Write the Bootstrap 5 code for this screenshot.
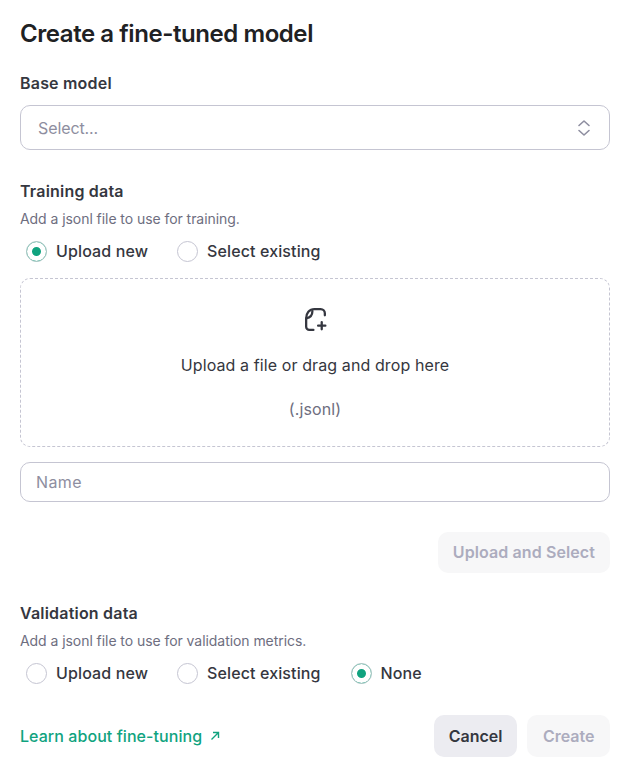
<!DOCTYPE html>
<html lang="en">
<head>
<meta charset="utf-8">
<title>Create a fine-tuned model</title>
<link href="https://cdn.jsdelivr.net/npm/bootstrap@5.3.0/dist/css/bootstrap.min.css" rel="stylesheet">
<style>
html,body{height:100%}
body{font-family:Inter,"Liberation Sans",sans-serif;color:#202123;background:#fff;font-size:16px;letter-spacing:-.2px;overflow:hidden}
.sheet{padding:18px 21px 0 20px;width:631px}
.ttl{font-size:24px;line-height:31px;font-weight:600;margin:0 0 22px;color:#202123;letter-spacing:-.43px}
.lbl{font-size:16px;line-height:24px;font-weight:600;color:#353740;margin:0;letter-spacing:.2px}
.hint{font-size:14px;line-height:20px;color:#6e6e80;margin:6px 0 0;letter-spacing:-.06px}
.pick{height:45px;border:1px solid #c5c5d2;border-radius:10px;margin-top:10px;padding:0 18px 0 17px;color:#8e8ea0;letter-spacing:-.1px}
.sec2{margin-top:29px}
.radios{margin-top:6px;padding-left:6px;gap:29px;height:32px}
.rad{gap:9px;font-size:16px;font-weight:500;color:#353740;letter-spacing:.12px}
.radios .rad:nth-child(3){margin-left:1px}
.dot{width:21px;height:21px;border:1px solid #c5c5d2;border-radius:50%;flex:none}
.dot.on{border:1px solid #b4c9c9;box-shadow:inset 0 0 0 5px #fff;background:#10a37f}
.drop{height:169px;margin-top:11px;border:1px dashed #c5c5d2;border-radius:10px;text-align:center;padding-top:27px;font-size:16px;color:#353740;letter-spacing:.1px}
.drop p{margin:0}
.lead-line{margin-top:20px!important}
.ext{color:#6e6e80;margin-top:20px!important}
.nameb{height:40px;margin-top:15px;border:1px solid #c5c5d2;border-radius:10px;padding:0 15px;color:#8e8ea0;font-size:16px;letter-spacing:.4px}
.act{height:41px;border-radius:10px;font-weight:600;font-size:16px;border:0;padding:0 15px 1px;letter-spacing:.1px}
.off{background:#f7f7f8;color:#acacbe}
.off:disabled{background:#f7f7f8;color:#acacbe;opacity:1}
.canc{background:#ececf1;color:#353740}
.canc:hover{background:#ececf1;color:#353740}
.upl{margin-top:30px}
.sec3{margin-top:28px}
.foot{margin-top:26px}
.foot .act{height:42px;letter-spacing:0}
.foot .canc{padding:0 15px}
.foot .crt{padding:0 15.5px}
.lrn{color:#10a37f;text-decoration:none;font-size:16px;font-weight:500;gap:8px;letter-spacing:.06px}
.btnrow{gap:10px}
</style>
</head>
<body>
<div class="sheet">
  <h1 class="ttl">Create a fine-tuned model</h1>
  <div class="lbl">Base model</div>
  <div class="pick d-flex align-items-center justify-content-between">
    <span>Select...</span>
    <svg width="14" height="18" viewBox="0 0 14 18" fill="none" stroke="#8e8ea0" stroke-width="1.6" stroke-linecap="round" stroke-linejoin="round"><path d="M2 6.500 7 2l5 4.500M2 11.500 7 16l5-4.500"/></svg>
  </div>
  <div class="sec2">
    <div class="lbl">Training data</div>
    <p class="hint">Add a jsonl file to use for training.</p>
    <div class="radios d-flex align-items-center">
      <div class="rad d-flex align-items-center"><span class="dot on"></span><span>Upload new</span></div>
      <div class="rad d-flex align-items-center"><span class="dot"></span><span>Select existing</span></div>
    </div>
  </div>
  <div class="drop">
    <svg width="27" height="27" viewBox="0 0 26 26" fill="none" stroke="#353740" stroke-width="2.200" stroke-linecap="round" stroke-linejoin="round" class="d-block mx-auto"><path d="M11 23H7a3 3 0 0 1-3-3v-8c0-5 3-9 8-9h6a4 4 0 0 1 4 4v2"/><path d="M4 12c2.500-.5 6-1.500 6-7"/><path d="M19 15.500v7M15.500 19h7"/></svg>
    <p class="lead-line">Upload a file or drag and drop here</p>
    <p class="ext">(.jsonl)</p>
  </div>
  <div class="nameb d-flex align-items-center">Name</div>
  <div class="upl d-flex justify-content-end"><button class="btn act off" disabled>Upload and Select</button></div>
  <div class="sec3">
    <div class="lbl">Validation data</div>
    <p class="hint">Add a jsonl file to use for validation metrics.</p>
    <div class="radios d-flex align-items-center">
      <div class="rad d-flex align-items-center"><span class="dot"></span><span>Upload new</span></div>
      <div class="rad d-flex align-items-center"><span class="dot"></span><span>Select existing</span></div>
      <div class="rad d-flex align-items-center"><span class="dot on"></span><span>None</span></div>
    </div>
  </div>
  <div class="foot d-flex align-items-center justify-content-between">
    <a href="#" class="lrn d-inline-flex align-items-center">Learn about fine-tuning
      <svg width="10" height="10" viewBox="0 0 10 10" fill="none" stroke="#10a37f" stroke-width="1.4"><path d="M1.500 8.500 8 2M3 1.500h5.500V7"/></svg></a>
    <div class="d-flex btnrow">
      <button class="btn act canc">Cancel</button>
      <button class="btn act off crt" disabled>Create</button>
    </div>
  </div>
</div>
<script src="https://cdn.jsdelivr.net/npm/bootstrap@5.3.0/dist/js/bootstrap.bundle.min.js"></script>
</body>
</html>
